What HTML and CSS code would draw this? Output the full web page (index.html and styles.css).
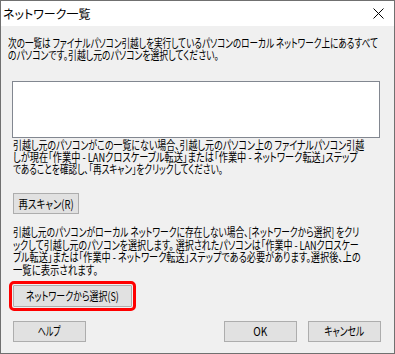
FILE: index.html
```html
<!DOCTYPE html>
<html lang="ja">
<head>
<meta charset="UTF-8">
<title>ネットワーク一覧</title>
<link rel="stylesheet" href="styles.css">
</head>
<body>

<div class="dialog">
    <div class="titlebar">
        <span class="title">ネットワーク一覧</span>
        <svg class="close" width="11" height="11" viewBox="0 0 11 11">
            <path d="M0.5 0.5 L10.5 10.5 M10.5 0.5 L0.5 10.5" stroke="#000" stroke-width="1" fill="none"/>
        </svg>
    </div>

    <div class="content">
        <p class="text intro">
            <span class="line" data-w="370">次の一覧は ファイナルパソコン引越しを実行しているパソコンのローカル ネットワーク上にあるすべて</span>
            <span class="line" data-w="211">のパソコンです。引越し元のパソコンを選択してください。</span>
        </p>

        <div class="listbox"></div>

        <p class="text note">
            <span class="line" data-w="351">引越し元のパソコンがこの一覧にない場合、引越し元のパソコン上の ファイナルパソコン引越</span>
            <span class="line" data-w="345">しが現在「作業中 - LANクロスケーブル転送」または「作業中 - ネットワーク転送」ステップ</span>
            <span class="line" data-w="210">であることを確認し、「再スキャン」をクリックしてください。</span>
        </p>

        <button class="btn rescan"><span class="label" data-w="55">再スキャン(R)</span></button>

        <p class="text note lower">
            <span class="line" data-w="346">引越し元のパソコンがローカル ネットワークに存在しない場合、[ネットワークから選択] をクリ</span>
            <span class="line" data-w="346">ックして引越し元のパソコンを選択します。 選択されたパソコンは「作業中 - LANクロスケー</span>
            <span class="line" data-w="348">ブル転送」または「作業中 - ネットワーク転送」ステップである必要があります。選択後、上の</span>
            <span class="line" data-w="85">一覧に表示されます。</span>
        </p>

        <button class="btn select"><span class="label" data-w="93">ネットワークから選択(S)</span></button>

        <div class="actions">
            <button class="btn help"><span class="label" data-w="23">ヘルプ</span></button>
            <span class="spacer"></span>
            <button class="btn ok"><span class="label" data-w="14">OK</span></button>
            <button class="btn cancel"><span class="label" data-w="40">キャンセル</span></button>
        </div>
    </div>
</div>

<script src="script.js"></script>
</body>
</html>
```

FILE: styles.css
```css
body {
    margin: 0;
    font-family: "Noto Sans CJK JP", "Noto Sans", sans-serif;
    background-color: #f0f0f0;
}

.dialog {
    width: 395px;
    height: 354px;
    box-sizing: border-box;
    border: 1px solid #707070;
    background-color: #f0f0f0;
    display: flex;
    flex-direction: column;
    overflow: hidden;
}

.titlebar {
    height: 25px;
    flex: none;
    background-color: #ffffff;
    display: flex;
    align-items: center;
    justify-content: space-between;
    padding: 0 10px 0 2px;
    font-size: 12px;
    color: #000;
}

.title {
    font-feature-settings: "palt";
}

.close {
    display: block;
}

.content {
    padding: 0 13px 0 11px;
}

.text {
    margin: 0;
    font-size: 12px;
    line-height: 12px;
    color: #000;
    font-feature-settings: "palt";
}

.line {
    display: block;
    width: max-content;
    white-space: nowrap;
    transform-origin: left top;
}

.intro {
    margin: 11px 0 0 -4px;
}

.listbox {
    width: 366px;
    height: 55px;
    margin-top: 20px;
    border: 1px solid #828790;
    background-color: #ffffff;
}

.note {
    margin: 1px 0 0 1px;
}

.lower {
    margin-top: 12px;
    line-height: 12.7px;
}

.btn {
    display: flex;
    align-items: center;
    justify-content: center;
    height: 22px;
    box-sizing: border-box;
    padding: 0;
    border: 1px solid #adadad;
    background-color: #e1e1e1;
    font-family: inherit;
    font-size: 12px;
    line-height: 12px;
    color: #000;
    white-space: nowrap;
    font-feature-settings: "palt";
}

.label {
    display: inline-block;
    transform-origin: center;
}

.rescan {
    width: 66px;
    height: 21px;
    margin: 18px 0 0 1px;
}

.select {
    width: 119px;
    margin: 8px 0 0 1px;
    border-radius: 1px;
    outline: 3px solid #ff0000;
    outline-offset: 1px;
}

.actions {
    display: flex;
    gap: 11px;
    margin: 14px 0 0 1px;
}

.actions .btn {
    width: 73px;
    height: 21px;
}

.spacer {
    flex: 1;
}
```

FILE: script.js
```js
// squeeze each line / label to the width the original font gives it
document.querySelectorAll('[data-w]').forEach(function (el) {
    var w = el.getBoundingClientRect().width;
    var target = parseFloat(el.getAttribute('data-w'));
    if (w > 0) {
        el.style.transform = 'scaleX(' + (target / w).toFixed(3) + ')';
    }
});
```
